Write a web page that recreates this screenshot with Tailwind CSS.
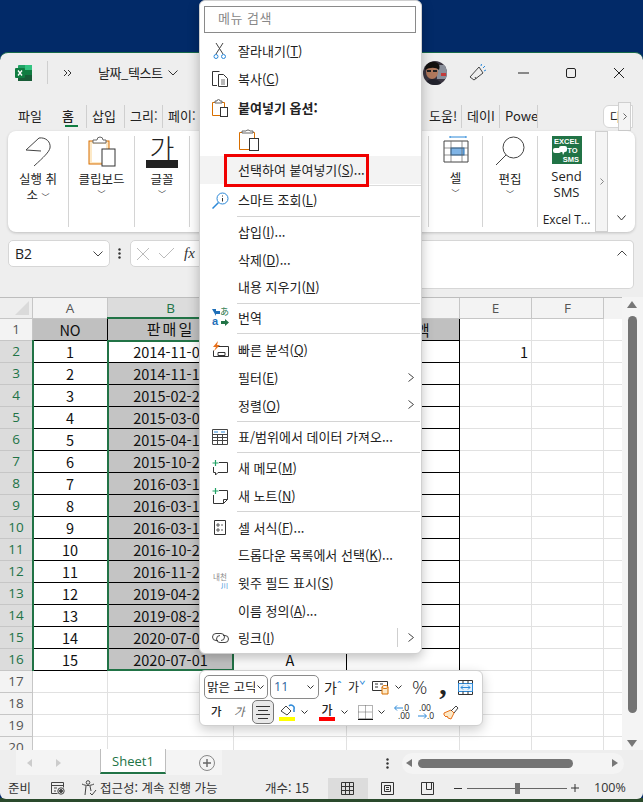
<!DOCTYPE html>
<html lang="ko">
<head>
<meta charset="UTF-8">
<title>Excel</title>
<script src="https://cdn.jsdelivr.net/npm/@tailwindcss/browser@4"></script>
</head>
<body class="bg-[#022a68] h-[802px] w-[643px] overflow-hidden font-['Noto_Sans_CJK_KR','Noto_Sans',sans-serif] text-[13px] text-[#222]">
<div class="relative h-[802px] w-[643px] overflow-hidden">
  <div class="absolute left-0 right-0 top-[798px] h-[4px] bg-[#2a4a2c]"></div>

  <!-- window -->
  <div class="absolute left-0 top-[52px] w-[643px] h-[747px] bg-[#eeeeee] rounded-t-lg rounded-b-md border-t border-[#17694a] overflow-hidden flex flex-col">

    <!-- title bar -->
    <div class="h-[39px] flex items-center shrink-0 relative">
      <svg class="ml-[15px] w-[18px] h-[18px]" viewBox="0 0 18 18"><rect x="3" y="1" width="14" height="16" rx="1" fill="#21a366"/><rect x="10" y="1" width="7" height="5" fill="#33c481"/><rect x="10" y="6" width="7" height="5" fill="#107c41"/><rect x="3" y="11" width="14" height="6" fill="#185c37"/><rect x="0" y="4" width="10" height="10" rx="1" fill="#107c41"/><path d="M3 6.500l4 5M7 6.500l-4 5" stroke="#fff" stroke-width="1.3"/></svg>
      <div class="ml-[14px] w-px h-[23px] bg-[#cfcfcf]"></div>
      <svg class="ml-[15px] w-[9px] h-[8px]" viewBox="0 0 9 8" fill="none" stroke="#333"><path d="M1 1l3 3-3 3M5 1l3 3-3 3"/></svg>
      <span class="ml-[26px] text-[13px] tracking-[-0.4px]">날짜_텍스트</span>
      <svg class="ml-[5px] w-[10px] h-[6px]" viewBox="0 0 10 6" fill="none" stroke="#333"><path d="M.5.5L5 5 9.500.5"/></svg>
      <div class="ml-auto flex items-center">
        <svg class="w-[24px] h-[24px]" viewBox="0 0 24 24"><defs><clipPath id="av"><circle cx="12" cy="12" r="12"/></clipPath></defs><g clip-path="url(#av)"><rect width="24" height="24" fill="#3a3540"/><rect x="14" y="4" width="10" height="14" fill="#8a8f9a"/><ellipse cx="9" cy="11" rx="6" ry="7" fill="#b0785c"/><path d="M2 9C2 3 7 0 12 1s5 5 4 8c-3-3-9-3-14 0z" fill="#14110f"/><rect x="4" y="9" width="4" height="2" fill="#222"/><rect x="10" y="9" width="4" height="2" fill="#222"/><path d="M2 24c1-5 5-6 8-6s7 1 9 6z" fill="#22222c"/><path d="M18 12h5v3h-5z" fill="#c23b3b"/></g></svg>
        <svg class="ml-[22px] w-[18px] h-[18px]" viewBox="0 0 18 18" fill="none" stroke="#444"><path d="M1 13L10 3l4 6-9 7z"/><path d="M7 15l-1-2"/><path d="M14 4l2-2M15 7l2-1M12 2l.5-2" stroke="#2b88d8"/></svg>
        <svg class="ml-[31px] w-[11px] h-[2px]" viewBox="0 0 11 2"><rect width="11" height="1" y=".5" fill="#222"/></svg>
        <div class="ml-[37px] w-[10px] h-[10px] border border-[#222] rounded-[2px]"></div>
        <svg class="ml-[38px] mr-[19px] w-[10px] h-[10px]" viewBox="0 0 10 10" stroke="#222"><path d="M0 0l10 10M10 0L0 10"/></svg>
      </div>
    </div>

    <!-- tabs -->
    <div class="h-[39px] shrink-0 relative flex items-center text-[13px] pt-[9px]">
      <span class="ml-[18px] w-[44px]">파일</span>
      <span class="w-[24px] relative font-medium">홈<span class="absolute left-[3px] top-[19px] w-[13px] h-[2px] bg-[#107c41]"></span></span>
      <div class="w-px h-[23px] bg-[#cfcfcf]"></div>
      <span class="ml-[5px] w-[32px]">삽입</span>
      <div class="w-px h-[23px] bg-[#cfcfcf]"></div>
      <span class="ml-[5px] w-[32px] overflow-hidden whitespace-nowrap">그리:</span>
      <div class="w-px h-[23px] bg-[#cfcfcf]"></div>
      <span class="ml-[5px] w-[29px] overflow-hidden whitespace-nowrap">페이:</span>
      <span class="ml-[232px] w-[32px]">도움!</span>
      <div class="w-px h-[23px] bg-[#cfcfcf]"></div>
      <span class="ml-[5px] w-[32px]">데이I</span>
      <div class="w-px h-[23px] bg-[#cfcfcf]"></div>
      <span class="ml-[5px] w-[32px] overflow-hidden">Powe</span>
      <div class="w-px h-[23px] bg-[#cfcfcf]"></div>
      <div class="absolute left-[603px] top-[13px] w-[30px] h-[23px] bg-white border border-[#d6d6d6] rounded-l-md pl-[6px] text-[12px] leading-[21px]">다</div>
      <div class="absolute left-[618px] top-[10px] w-[13px] h-[29px] bg-[#f4f4f4] border border-[#cfcfcf] flex items-center justify-center">
        <svg class="w-[4px] h-[7px]" viewBox="0 0 4 7" fill="none" stroke="#666"><path d="M.5.5l3 3-3 3"/></svg>
      </div>
    </div>

    <!-- ribbon -->
    <div class="h-[101px] mx-[8px] shrink-0 bg-white rounded-lg shadow-[0_1px_3px_rgba(0,0,0,0.2)] flex relative text-[12.5px] leading-[16px]">
      <div class="w-[61px] my-[5px] border-r border-[#d4d4d4] flex flex-col items-center">
        <svg class="mt-[1px] w-[28px] h-[30px]" viewBox="0 0 28 30" fill="none" stroke="#444" stroke-width="1"><path d="M15 1L2 13l15 1"/><path d="M15 1c7-1 12 4 11 10-1 4-6 9-16 18"/></svg>
        <div class="text-center mt-[4px] w-[58px]">실행 취<br>소 <span class="text-[8px]">﹀</span></div>
      </div>
      <div class="w-[66px] my-[5px] border-r border-[#d4d4d4] flex flex-col items-center">
        <svg class="w-[28px] h-[32px]" viewBox="0 0 28 32" fill="none"><rect x="1" y="5" width="20" height="23" fill="#fde9c7" stroke="#d86f00" stroke-width="1"/><rect x="4" y="8" width="14" height="18" fill="#fff"/><path d="M5 7V4h4a3 3 0 0 1 6 0h3v3z" fill="#fff" stroke="#666"/><rect x="14" y="13" width="13" height="17" fill="#fff" stroke="#333"/></svg>
        <div class="text-center mt-[3px]">클립보드</div>
        <span class="text-[8px] leading-[14px]">﹀</span>
      </div>
      <div class="w-[55px] my-[5px] border-r border-[#d4d4d4] flex flex-col items-center">
        <span class="text-[27px] leading-[24px] font-light h-[24px]">가</span>
        <div class="w-[32px] h-[8px] bg-[#222] mb-[1px]"></div>
        <div class="text-center mt-[2px]">글꼴</div>
        <span class="text-[8px] leading-[14px]">﹀</span>
      </div>
      <div class="w-[238px]"></div>
      <div class="w-[55px] my-[5px] border-l border-r border-[#d4d4d4] flex flex-col items-center">
        <svg class="w-[28px] h-[28px]" viewBox="0 0 28 28" fill="none"><path d="M8 1h16M8 0v2M24 0v2" stroke="#2b88d8"/><path d="M2 5h24v21H2z" stroke="#444"/><rect x="9" y="12" width="13" height="7" fill="#7fb4e6" stroke="#1f6fb8"/><path d="M9 5v21M20 5v21M2 12h24M2 19h24" stroke="#666" stroke-width=".7"/></svg>
        <div class="text-center mt-[6px]">셀</div>
        <span class="text-[8px] leading-[14px]">﹀</span>
      </div>
      <div class="w-[55px] my-[5px] border-r border-[#d4d4d4] flex flex-col items-center">
        <svg class="w-[30px] h-[30px]" viewBox="0 0 30 30" fill="none" stroke="#444"><circle cx="18.500" cy="11.500" r="10.500"/><path d="M11 19L1 29"/></svg>
        <div class="text-center mt-[5px]">편집</div>
        <span class="text-[8px] leading-[14px]">﹀</span>
      </div>
      <div class="w-[57px] my-[5px] flex flex-col items-center">
        <div class="relative w-[30px] h-[30px] bg-[#217346] text-white text-[7.5px] leading-[9px] font-bold text-center pt-[1px] font-['Liberation_Sans',sans-serif]">EXCEL<br><span class="pl-[12px]">TO</span><br><span class="pl-[9px]">SMS</span>
          <svg class="absolute left-[1px] top-[10px] w-[14px] h-[9px]" viewBox="0 0 14 9" fill="#fff"><rect y="2" width="8" height="5" rx="2"/><rect x="6" width="8" height="6" rx="2"/><path d="M9 5l1 4 2-4z"/></svg>
        </div>
        <div class="text-center mt-[4px] text-[13px] leading-[16px] font-['Open_Sans',sans-serif]">Send<br>SMS</div>
        <div class="mt-[12px] text-[12px] leading-[15px] whitespace-nowrap font-['Open_Sans',sans-serif]">Excel T...</div>
      </div>
      <div class="w-[13px] bg-[#f4f4f4] border border-[#cfcfcf] flex items-center justify-center">
        <svg class="w-[4px] h-[7px]" viewBox="0 0 4 7" fill="none" stroke="#888"><path d="M.5.5l3 3-3 3"/></svg>
      </div>
      <svg class="absolute left-[609px] top-[84px] w-[9px] h-[6px]" viewBox="0 0 9 6" fill="none" stroke="#333"><path d="M.5.5L4.500 5 8.500.5"/></svg>
    </div>

    <!-- formula bar -->
    <div class="h-[65px] shrink-0 relative">
      <div class="absolute left-[8px] top-[8px] w-[102px] h-[27px] bg-white border border-[#d6d6d6] rounded-[5px] flex items-center px-[6px] text-[14px] font-['Open_Sans',sans-serif]">
        B2
        <svg class="ml-auto w-[10px] h-[6px]" viewBox="0 0 10 6" fill="none" stroke="#444"><path d="M.5.5L5 5 9.500.5"/></svg>
      </div>
      <svg class="absolute left-[118px] top-[16px] w-[3px] h-[11px]" viewBox="0 0 3 11" fill="#333"><circle cx="1.500" cy="1.500" r="1.200"/><circle cx="1.500" cy="5.500" r="1.200"/><circle cx="1.500" cy="9.500" r="1.200"/></svg>
      <div class="absolute left-[130px] top-[8px] w-[504px] h-[27px] bg-white border border-[#d6d6d6] rounded-[5px]">
        <div class="flex items-center h-full pl-[6px]">
          <svg class="w-[12px] h-[12px]" viewBox="0 0 12 12" stroke="#bbb"><path d="M0 0l12 12M12 0L0 12"/></svg>
          <svg class="ml-[10px] w-[15px] h-[11px]" viewBox="0 0 15 11" fill="none" stroke="#bbb"><path d="M0 5l5 5L15 0"/></svg>
          <span class="ml-[10px] text-[15px] italic font-['Liberation_Serif',serif] text-[#333]">fx</span>
        </div>
      </div>
      <div class="absolute left-[205px] top-[8px] w-[429px] h-[49px] bg-white border border-[#d6d6d6] rounded-r-[5px] border-l-0 flex justify-end pt-[9px] pr-[6px]">
        <svg class="w-[10px] h-[6px]" viewBox="0 0 10 6" fill="none" stroke="#444"><path d="M.5 5.500L5 1l4.500 4.500"/></svg>
      </div>
    </div>

    <!-- sheet -->
    <div class="flex-1 relative min-h-0">
      <div class="flex h-[453px] w-[622px] border-t border-[#bdbdbd] overflow-hidden relative">
        <div id="grid" class="w-[622px] text-[14.5px] text-[#111]"></div>
        <!-- selection outlines -->
        <div class="absolute left-[32px] top-[42px] w-[2px] h-[331px] bg-[#217346]"></div>
        <div class="absolute left-[107px] top-[42px] w-[2px] h-[331px] bg-[#217346]"></div>
        <div class="absolute left-[107px] top-[19px] w-[126px] h-[2px] bg-[#217346]"></div>
        <div class="absolute left-[108px] top-[42px] w-[126px] h-[2px] bg-[#217346]"></div>
        <div class="absolute left-[108px] top-[371px] w-[126px] h-[2px] bg-[#217346]"></div>
        <div class="absolute left-[232px] top-[42px] w-[2px] h-[331px] bg-[#217346]"></div>
      </div>
      <!-- vertical scrollbar -->
      <div class="absolute left-[622px] top-0 w-[21px] h-[453px] bg-[#f4f4f4]">
        <svg class="absolute left-[5px] top-[4px] w-[10px] h-[7px]" viewBox="0 0 10 7"><path d="M5 0l5 7H0z" fill="#777"/></svg>
        <div class="absolute left-[6px] top-[19px] w-[9px] h-[397px] rounded-full bg-[#747474]"></div>
        <svg class="absolute left-[5px] top-[443px] w-[10px] h-[7px]" viewBox="0 0 10 7"><path d="M5 7l5-7H0z" fill="#777"/></svg>
      </div>
      <!-- sheet tabs + hscroll -->
      <div class="h-[28px] relative flex items-start bg-[#eeeeee]">
        <div class="ml-[16px] w-[206px] h-[25px] bg-[#f4f4f4] absolute left-0 top-0"></div>
        <svg class="absolute left-[27px] top-[9px] w-[5px] h-[8px]" viewBox="0 0 5 8"><path d="M5 0v8L0 4z" fill="#ccc"/></svg>
        <svg class="absolute left-[56px] top-[9px] w-[5px] h-[8px]" viewBox="0 0 5 8"><path d="M0 0v8l5-4z" fill="#ccc"/></svg>
        <div class="absolute left-[100px] top-[-1px] w-[66px] h-[25px] bg-white border-x border-[#bdbdbd] border-b-2 border-b-[#217346] text-[#217346] text-[13px] text-center leading-[24px] font-['Open_Sans',sans-serif]">Sheet1</div>
        <div class="absolute left-[199px] top-[5px] w-[16px] h-[16px] rounded-full border border-[#888] flex items-center justify-center">
          <svg class="w-[8px] h-[8px]" viewBox="0 0 8 8" stroke="#666" stroke-width="1.400"><path d="M4 0v8M0 4h8"/></svg>
        </div>
        <svg class="absolute left-[386px] top-[8px] w-[3px] h-[11px]" viewBox="0 0 3 11" fill="#333"><circle cx="1.500" cy="1.500" r="1.200"/><circle cx="1.500" cy="5.500" r="1.200"/><circle cx="1.500" cy="9.500" r="1.200"/></svg>
        <div class="absolute left-[402px] top-[3px] w-[222px] h-[21px] rounded-full bg-[#f4f4f4]"></div>
        <svg class="absolute left-[406px] top-[9px] w-[6px] h-[8px]" viewBox="0 0 6 8"><path d="M6 0v8L0 4z" fill="#777"/></svg>
        <div class="absolute left-[418px] top-[9px] w-[155px] h-[9px] rounded-full bg-[#747474]"></div>
        <svg class="absolute left-[612px] top-[9px] w-[6px] h-[8px]" viewBox="0 0 6 8"><path d="M0 0v8l6-4z" fill="#777"/></svg>
      </div>
      <!-- status bar -->
      <div class="h-[21px] relative text-[12.5px] leading-[20px] text-[#333]">
        <span class="absolute left-[8px] top-0">준비</span>
        <svg class="absolute left-[51px] top-[3px] w-[14px] h-[14px]" viewBox="0 0 14 14" fill="none" stroke="#444"><path d="M.5 1.500h12M.5 4.500h12M.5 1.500v11h6M12.500 1.500v5M3 7h3M3 10h2"/><circle cx="10" cy="10" r="3.200"/><circle cx="10" cy="10" r="1.500" fill="#444"/></svg>
        <svg class="absolute left-[82px] top-[2px] w-[15px] h-[16px]" viewBox="0 0 15 16" fill="none" stroke="#444"><circle cx="6" cy="2.500" r="1.800"/><path d="M0 4c4 2 8 2 12 0M4 6l-1 9M8 6l1 5"/><path d="M8 13l2 2 4-5"/></svg>
        <span class="absolute left-[100px] top-0 whitespace-nowrap">접근성: 계속 진행 가능</span>
        <span class="absolute left-[265px] top-0 whitespace-nowrap">개수: 15</span>
        <div class="absolute left-[328px] top-0 w-[40px] h-[21px] bg-[#dcdcdc]"></div>
        <svg class="absolute left-[341px] top-[4px] w-[13px] h-[13px]" viewBox="0 0 13 13" fill="none" stroke="#333"><path d="M.5.5h12v12H.5zM4.500.5v12M8.500.5v12M.5 4.500h12M.5 8.500h12"/></svg>
        <svg class="absolute left-[381px] top-[4px] w-[13px] h-[13px]" viewBox="0 0 13 13" fill="none" stroke="#333"><path d="M.5.5h12v12H.5z"/><path d="M3.500 3.500h6v6h-6zM5 5.500h3M5 7.500h3"/></svg>
        <svg class="absolute left-[421px] top-[4px] w-[13px] h-[13px]" viewBox="0 0 13 13" fill="none" stroke="#333"><path d="M.5.5h12v12H.5zM5.500.5v7h5v-7"/></svg>
        <div class="absolute left-[454px] top-[10px] w-[8px] h-px bg-[#333]"></div>
        <div class="absolute left-[467px] top-[10px] w-[100px] h-px bg-[#666]"></div>
        <div class="absolute left-[515px] top-[5px] w-[5px] h-[11px] bg-[#747474]"></div>
        <svg class="absolute left-[571px] top-[6px] w-[8px] h-[8px]" viewBox="0 0 8 8" stroke="#333"><path d="M4 0v8M0 4h8"/></svg>
        <span class="absolute left-[594px] top-0 font-['Open_Sans',sans-serif]">100%</span>
      </div>
    </div>
  </div>

  <!-- context menu -->
  <div class="absolute left-[199px] top-0 w-[223px] h-[654px] bg-white rounded-md border border-[#d0d0d0] shadow-[0_4px_12px_rgba(0,0,0,0.25)] text-[13px] text-[#222]">
    <div class="ml-[4px] mt-[5px] w-[212px] h-[27px] border border-[#8a8a8a] pl-[13px] leading-[22px] text-[#888] text-[13px] tracking-[0.5px]">메뉴 검색</div>
    <div class="mt-[4px]">
      <div class="h-[28px] flex items-center">
        <svg class="ml-[13px] w-[14px] h-[16px]" viewBox="0 0 14 16" fill="none" stroke="#444"><path d="M3 0l7 11M10 0L3 11"/><circle cx="3" cy="13.500" r="2" stroke="#2b88d8"/><circle cx="10.500" cy="13.500" r="2" stroke="#2b88d8"/></svg>
        <span class="ml-[11px]">잘라내기(<u>T</u>)</span>
      </div>
      <div class="h-[28px] flex items-center">
        <svg class="ml-[12px] w-[16px] h-[16px]" viewBox="0 0 16 16" fill="none" stroke="#333"><path d="M5 14.500H.5V.5h7"/><path d="M6.500 3.500h5l4 4v8h-9z"/><path d="M9 9h4M9 11h4M9 13h4" stroke-width=".7"/></svg>
        <span class="ml-[10px]">복사(<u>C</u>)</span>
      </div>
      <div class="h-[30px] flex items-center">
        <svg class="ml-[12px] w-[16px] h-[18px]" viewBox="0 0 16 18" fill="none"><path d="M.5 3.500h12v13H.5z" stroke="#d86f00"/><path d="M3 4V2h2a1.500 1.500 0 0 1 3 0h2v2z" fill="#fff" stroke="#666"/><rect x="8.500" y="8.500" width="7" height="9" fill="#fff" stroke="#333"/></svg>
        <span class="ml-[10px] font-bold">붙여넣기 옵션:</span>
      </div>
      <div class="h-[33px] flex items-center">
        <svg class="ml-[39px] w-[20px] h-[23px]" viewBox="0 0 20 23" fill="none"><path d="M.5 4.500h15v17H.5z" stroke="#d86f00"/><path d="M3 5V3h4a2.500 2.500 0 0 1 4 0h3v2z" fill="#fff" stroke="#666"/><rect x="10.500" y="10.500" width="9" height="12" fill="#fff" stroke="#333"/></svg>
      </div>
      <div class="h-[28px] flex items-center bg-[#f3f3f3]">
        <span class="ml-[38px]">선택하여 붙여넣기(<u>S</u>)...</span>
      </div>
      <div class="h-[2px] ml-[37px] border-b border-[#dcdcdc]"></div>
      <div class="h-[28px] flex items-center">
        <svg class="ml-[12px] w-[17px] h-[17px]" viewBox="0 0 17 17" fill="none" stroke="#2b88d8"><circle cx="10.500" cy="6.500" r="5.500"/><path d="M6.500 10.500L.5 16.500" stroke-width="1.500"/><path d="M10.500 6v3.500M10.500 3.500v1" stroke="#333"/></svg>
        <span class="ml-[9px]">스마트 조회(<u>L</u>)</span>
      </div>
      <div class="h-[4px] ml-[37px] mr-[1px] flex items-center"><div class="w-full h-px bg-[#d4d4d4]"></div></div>
      <div class="h-[27.7px] flex items-center"><span class="ml-[38px]">삽입(<u>I</u>)...</span></div>
      <div class="h-[27.7px] flex items-center"><span class="ml-[38px]">삭제(<u>D</u>)...</span></div>
      <div class="h-[27.7px] flex items-center"><span class="ml-[38px]">내용 지우기(<u>N</u>)</span></div>
      <div class="h-[4px] ml-[37px] mr-[1px] flex items-center"><div class="w-full h-px bg-[#d4d4d4]"></div></div>
      <div class="h-[26px] flex items-center relative">
        <svg class="absolute left-[12px] top-[4px] w-[8px] h-[7px]" viewBox="0 0 8 7"><path d="M0 0h4V2h4v3H4v2z" fill="#1f6fb8"/></svg>
        <span class="absolute left-[12px] top-[11px] text-[11px] leading-[11px] font-bold text-[#1f6fb8] font-['Liberation_Sans',sans-serif]">a</span>
        <span class="absolute left-[20px] top-[1px] text-[9px] leading-[11px] text-[#217346]">あ</span>
        <svg class="absolute left-[21px] top-[14px] w-[8px] h-[7px]" viewBox="0 0 8 7"><path d="M0 2h4V0l4 3.500L4 7V5H0z" fill="#217346"/></svg>
        <span class="ml-[38px]">번역</span>
      </div>
      <div class="h-[5px] ml-[37px] mr-[1px] flex items-center"><div class="w-full h-px bg-[#d4d4d4]"></div></div>
      <div class="h-[27.7px] flex items-center">
        <svg class="ml-[12px] w-[17px] h-[17px]" viewBox="0 0 17 17" fill="none"><path d="M2 5.500h14.500v10H1.500v-6" stroke="#333"/><path d="M6 11.500h7v3H6z" stroke="#333"/><path d="M6 0L1 6h3L2 10l6-6H5z" fill="#e8701a"/></svg>
        <span class="ml-[9px]">빠른 분석(<u>Q</u>)</span>
      </div>
      <div class="h-[27.7px] flex items-center relative">
        <span class="ml-[38px]">필터(<u>E</u>)</span>
        <svg class="absolute left-[208px] top-[9px] w-[6px] h-[9px]" viewBox="0 0 6 9" fill="none" stroke="#444"><path d="M.5.5l5 4-5 4"/></svg>
      </div>
      <div class="h-[27.7px] flex items-center relative">
        <span class="ml-[38px]">정렬(<u>O</u>)</span>
        <svg class="absolute left-[208px] top-[9px] w-[6px] h-[9px]" viewBox="0 0 6 9" fill="none" stroke="#444"><path d="M.5.5l5 4-5 4"/></svg>
      </div>
      <div class="h-[4px] ml-[37px] mr-[1px] flex items-center"><div class="w-full h-px bg-[#d4d4d4]"></div></div>
      <div class="h-[27px] flex items-center">
        <svg class="ml-[12px] w-[16px] h-[16px]" viewBox="0 0 16 16" fill="none" stroke="#444"><path d="M.5.5h15v15H.5zM.5 5.500h15M.5 8.500h15M.5 11.500h15M5.500 5.500v10M10.500 5.500v10"/><path d="M2 3h4M9 3h4" stroke="#2b88d8"/></svg>
        <span class="ml-[10px] whitespace-nowrap">표/범위에서 데이터 가져오...</span>
      </div>
      <div class="h-[4px] ml-[37px] mr-[1px] flex items-center"><div class="w-full h-px bg-[#d4d4d4]"></div></div>
      <div class="h-[27.7px] flex items-center">
        <svg class="ml-[12px] w-[16px] h-[16px]" viewBox="0 0 16 16" fill="none"><path d="M7 2.500h8.500v10H6L3.500 15v-2.500h-2V7" stroke="#333"/><path d="M3.500 0v6M.5 3h6" stroke="#21a366" stroke-width="1.200"/></svg>
        <span class="ml-[10px]">새 메모(<u>M</u>)</span>
      </div>
      <div class="h-[27.7px] flex items-center">
        <svg class="ml-[12px] w-[16px] h-[16px]" viewBox="0 0 16 16" fill="none"><path d="M7 2.500h8.500v9l-4 4H1.500V7" stroke="#333"/><path d="M15.500 11.500h-4v4" stroke="#333"/><path d="M3.500 0v6M.5 3h6" stroke="#21a366" stroke-width="1.200"/></svg>
        <span class="ml-[10px]">새 노트(<u>N</u>)</span>
      </div>
      <div class="h-[4px] ml-[37px] mr-[1px] flex items-center"><div class="w-full h-px bg-[#d4d4d4]"></div></div>
      <div class="h-[27.7px] flex items-center">
        <svg class="ml-[14px] w-[12px] h-[15px]" viewBox="0 0 12 15" fill="none" stroke="#333"><path d="M.5.5h11v14H.5z"/><path d="M3 4h2v2H3zM3 9h2v2H3zM7 5h2M7 10h2" stroke-width=".8"/></svg>
        <span class="ml-[12px]">셀 서식(<u>F</u>)...</span>
      </div>
      <div class="h-[27.7px] flex items-center"><span class="ml-[38px] whitespace-nowrap">드롭다운 목록에서 선택(<u>K</u>)...</span></div>
      <div class="h-[27.7px] flex items-center relative">
        <span class="absolute left-[13px] top-[3px] text-[7.5px] leading-[9px] text-[#888]">내천</span>
        <span class="absolute left-[21px] top-[12px] text-[7px] leading-[9px] text-[#2b88d8]">川</span>
        <span class="ml-[38px]">윗주 필드 표시(<u>S</u>)</span>
      </div>
      <div class="h-[27.7px] flex items-center"><span class="ml-[38px]">이름 정의(<u>A</u>)...</span></div>
      <div class="h-[27.7px] flex items-center relative">
        <svg class="ml-[12px] w-[17px] h-[10px]" viewBox="0 0 17 10" fill="none" stroke="#444"><path d="M6 7.500H4a3.500 3.500 0 0 1 0-7h5a3.500 3.500 0 0 1 0 7"/><path d="M11 2.500h2a3.500 3.500 0 0 1 0 7H8a3.500 3.500 0 0 1 0-7"/></svg>
        <span class="ml-[9px]">링크(<u>I</u>)</span>
        <div class="absolute left-[197px] top-[4px] w-px h-[19px] bg-[#cfcfcf]"></div>
        <svg class="absolute left-[208px] top-[9px] w-[6px] h-[9px]" viewBox="0 0 6 9" fill="none" stroke="#444"><path d="M.5.5l5 4-5 4"/></svg>
      </div>
    </div>
  </div>

  <!-- red annotation box -->
  <div class="absolute left-[224px] top-[154px] w-[145px] h-[33px] border-[3px] border-[#f00000]"></div>

  <!-- mini toolbar -->
  <div class="absolute left-[199px] top-[670px] w-[284px] h-[56px] bg-white rounded-md border border-[#d0d0d0] shadow-[0_4px_12px_rgba(0,0,0,0.2)] text-[#222]">
    <div class="flex items-center h-[26px] mt-[3px] ml-[4px]">
      <div class="w-[64px] h-[24px] border border-[#8a8a8a] rounded-[5px] flex items-center pl-[2px] text-[12.5px] whitespace-nowrap overflow-hidden">
        <span class="w-[48px] overflow-hidden">맑은 고딕</span>
        <svg class="ml-[2px] w-[7px] h-[5px]" viewBox="0 0 7 5" fill="none" stroke="#333"><path d="M.5.5l3 3 3-3"/></svg>
      </div>
      <div class="ml-[2px] w-[49px] h-[24px] border border-[#8a8a8a] rounded-[5px] flex items-center pl-[3px] text-[12.5px] font-['Open_Sans',sans-serif]">
        <span class="text-[#2b5fa0]">11</span>
        <svg class="ml-auto mr-[4px] w-[7px] h-[5px]" viewBox="0 0 7 5" fill="none" stroke="#333"><path d="M.5.5l3 3 3-3"/></svg>
      </div>
      <div class="ml-[5px] w-[24px] relative h-[20px] text-[14px] leading-[20px]">가<span class="absolute left-[13px] -top-[2px] text-[#2b88d8] text-[11px]">ˆ</span></div>
      <div class="w-[24px] relative h-[20px] text-[12px] leading-[20px]">가<span class="absolute left-[11px] -top-[2px] text-[#2b88d8] text-[11px]">ˇ</span></div>
      <svg class="w-[17px] h-[16px]" viewBox="0 0 17 16" fill="none"><path d="M.5 2.500h15v9H.5z" stroke="#333"/><path d="M3 5h3M3 8h3M8 5h3" stroke="#333"/><path d="M10 8h6v7h-6z" fill="#fde9c7" stroke="#d86f00"/><ellipse cx="13" cy="8" rx="3" ry="1.500" fill="#fff" stroke="#d86f00"/></svg>
      <svg class="ml-[6px] w-[7px] h-[5px]" viewBox="0 0 7 5" fill="none" stroke="#333"><path d="M.5.5l3 3 3-3"/></svg>
      <span class="ml-[10px] text-[19px] leading-[20px] font-['Open_Sans',sans-serif] font-light">%</span>
      <span class="ml-[12px] w-[8px] text-[30px] leading-[14px] h-[20px] font-bold font-['Liberation_Serif',serif]">,</span>
      <svg class="ml-[11px] w-[15px] h-[15px]" viewBox="0 0 15 15" fill="none"><path d="M.5.5h14v14H.5z" stroke="#333"/><path d="M.5 3.500h14v8H.5z" fill="#e3f1fc" stroke="#2b88d8"/><path d="M3 7.500h9M3 7.500l2-2M3 7.500l2 2M12 7.500l-2-2M12 7.500l-2 2" stroke="#2b88d8"/><path d="M5 .5v3M10 .5v3M5 11.500v3M10 11.500v3" stroke="#333"/></svg>
    </div>
    <div class="flex items-center h-[24px] ml-[11px]">
      <span class="w-[12px] text-[11.5px] font-medium">가</span>
      <span class="ml-[11px] w-[12px] text-[11.5px] italic text-[#666]">가</span>
      <div class="ml-[6px] w-[22px] h-[24px] bg-[#e8e8e8] border border-[#777] rounded-[5px] flex items-center justify-center">
        <svg class="w-[14px] h-[13px]" viewBox="0 0 14 13" stroke="#333"><path d="M0 .5h14M2 4.500h10M0 8.500h14M2 12.500h10"/></svg>
      </div>
      <div class="ml-[5px] w-[16px] flex flex-col items-center">
        <svg class="w-[15px] h-[12px]" viewBox="0 0 15 12" fill="none"><path d="M1 7l5-5 5 5-4 4z" stroke="#444"/><path d="M9 2a3 3 0 0 1 5 3v3" stroke="#2b88d8" stroke-width="1.500"/></svg>
        <div class="w-[16px] h-[4px] bg-[#ffff00] mt-[1px]"></div>
      </div>
      <svg class="ml-[6px] w-[7px] h-[5px]" viewBox="0 0 7 5" fill="none" stroke="#333"><path d="M.5.5l3 3 3-3"/></svg>
      <div class="ml-[11px] w-[16px] flex flex-col items-center">
        <span class="text-[12px] leading-[12px] font-medium">가</span>
        <div class="w-[16px] h-[4px] bg-[#ff0000] mt-[1px]"></div>
      </div>
      <svg class="ml-[6px] w-[7px] h-[5px]" viewBox="0 0 7 5" fill="none" stroke="#333"><path d="M.5.5l3 3 3-3"/></svg>
      <svg class="ml-[10px] w-[15px] h-[15px]" viewBox="0 0 15 15" fill="none" stroke="#666" stroke-dasharray="1 1"><path d="M.5.5h14v13H.5zM7.500.5v13M.5 7h14"/><path d="M0 14.500h15" stroke="#111" stroke-dasharray="none"/></svg>
      <svg class="ml-[5px] w-[7px] h-[5px]" viewBox="0 0 7 5" fill="none" stroke="#333"><path d="M.5.5l3 3 3-3"/></svg>
      <div class="ml-[9px] w-[16px] h-[16px] relative text-[8.5px] leading-[8px] font-['Open_Sans',sans-serif]">
        <span class="absolute left-[8px] top-0">.0</span><span class="absolute left-[4px] top-[8px]">.00</span>
        <svg class="absolute left-0 top-[1px] w-[9px] h-[6px]" viewBox="0 0 9 6" fill="none" stroke="#2b88d8"><path d="M9 3H1M3 .5L.5 3 3 5.500"/></svg>
      </div>
      <div class="ml-[8px] w-[16px] h-[16px] relative text-[8.5px] leading-[8px] font-['Open_Sans',sans-serif]">
        <span class="absolute left-[1px] top-0">.00</span><span class="absolute left-[9px] top-[8px]">.0</span>
        <svg class="absolute left-0 top-[9px] w-[9px] h-[6px]" viewBox="0 0 9 6" fill="none" stroke="#2b88d8"><path d="M0 3h8M6 .5L8.500 3 6 5.500"/></svg>
      </div>
      <svg class="ml-[9px] w-[16px] h-[15px]" viewBox="0 0 16 15" fill="none"><path d="M1 8l7-3 3 3-3 6-3-1-1-2-1 1-2-2z" stroke="#e8701a" fill="#fde9c7"/><path d="M8 6l5-5 2 2-4 5" stroke="#444"/></svg>
    </div>
  </div>
</div>

<script>
// rows of the sheet: the dates run on under the context menu
const dates = ['2014-11-03','2014-11-14','2015-02-26','2015-03-05','2015-04-17','2015-10-22','2016-03-10','2016-03-15','2016-03-18','2016-10-24','2016-11-25','2019-04-22','2019-08-20','2020-07-01','2020-07-01'];
const grey = 'border-r border-b border-[#e1e1e1]';
const dark = 'border-r border-b border-black';
const cell = 'h-full flex items-center justify-center shrink-0 ';
const hdr = "h-full flex items-center justify-center shrink-0 border-r border-b border-[#c6c6c6] text-[13.5px] font-['Open_Sans'] ";
let html = `<div class="flex h-[21px]">
  <div class="${hdr} w-[33px] bg-[#eeeeee] relative"><svg class="absolute right-[3px] bottom-[3px] w-[14px] h-[14px]" viewBox="0 0 14 14"><path d="M14 0v14H0z" fill="#dadada"/></svg></div>
  <div class="${hdr} w-[75px] bg-[#f3f3f3] text-[#555]">A</div>
  <div class="${hdr} w-[126px] bg-[#dcdcdc] text-[#217346]">B</div>
  <div class="${hdr} w-[113px] bg-[#f3f3f3]"></div>
  <div class="${hdr} w-[113px] bg-[#f3f3f3]"></div>
  <div class="${hdr} w-[72px] bg-[#f3f3f3] text-[#555]">E</div>
  <div class="${hdr} w-[72px] bg-[#f3f3f3] text-[#555]">F</div>
  <div class="h-full flex-1 bg-[#f3f3f3]"></div>
</div>`;
for (let r = 1; r <= 20; r++) {
  const inTable = r <= 16;
  const b = inTable ? dark : grey;
  const sel = r >= 2 && r <= 16;
  const no = r === 1 ? 'NO' : inTable ? r - 1 : '';
  const date = r === 1 ? '<span class="tracking-[2px] text-[15px]">판매일</span>' : inTable ? dates[r - 2] : '';
  const head = r === 1 ? 'bg-[#c0c0c0]' : 'bg-white';
  const bcol = r === 1 ? 'bg-[#c0c0c0]' : r === 2 ? 'bg-white' : inTable ? 'bg-[#c4c4c4]' : 'bg-white';
  html += `<div class="flex h-[22px]">
    <div class="${cell} w-[33px] border-r border-b border-[#c6c6c6] text-[13.5px] font-['Open_Sans'] ${sel ? 'bg-[#dcdcdc] text-[#217346]' : 'bg-[#f3f3f3] text-[#555]'}">${r}</div>
    <div class="${cell} w-[75px] ${b} ${inTable ? head : 'bg-white'}">${no}</div>
    <div class="${cell} w-[126px] ${b} ${bcol}">${date}</div>
    <div class="${cell} w-[113px] ${b} ${inTable ? head : 'bg-white'}">${r === 16 ? 'A' : ''}</div>
    <div class="${cell} w-[113px] ${b} ${inTable ? head : 'bg-white'}">${r === 1 ? '판매금액' : ''}</div>
    <div class="${cell} w-[72px] ${grey} bg-white !justify-end pr-[3px]">${r === 2 ? '1' : ''}</div>
    <div class="${cell} w-[72px] ${grey} bg-white"></div>
    <div class="h-full flex-1 bg-white border-b border-[#e1e1e1]"></div>
  </div>`;
}
document.getElementById('grid').innerHTML = html;
</script>
</body>
</html>
